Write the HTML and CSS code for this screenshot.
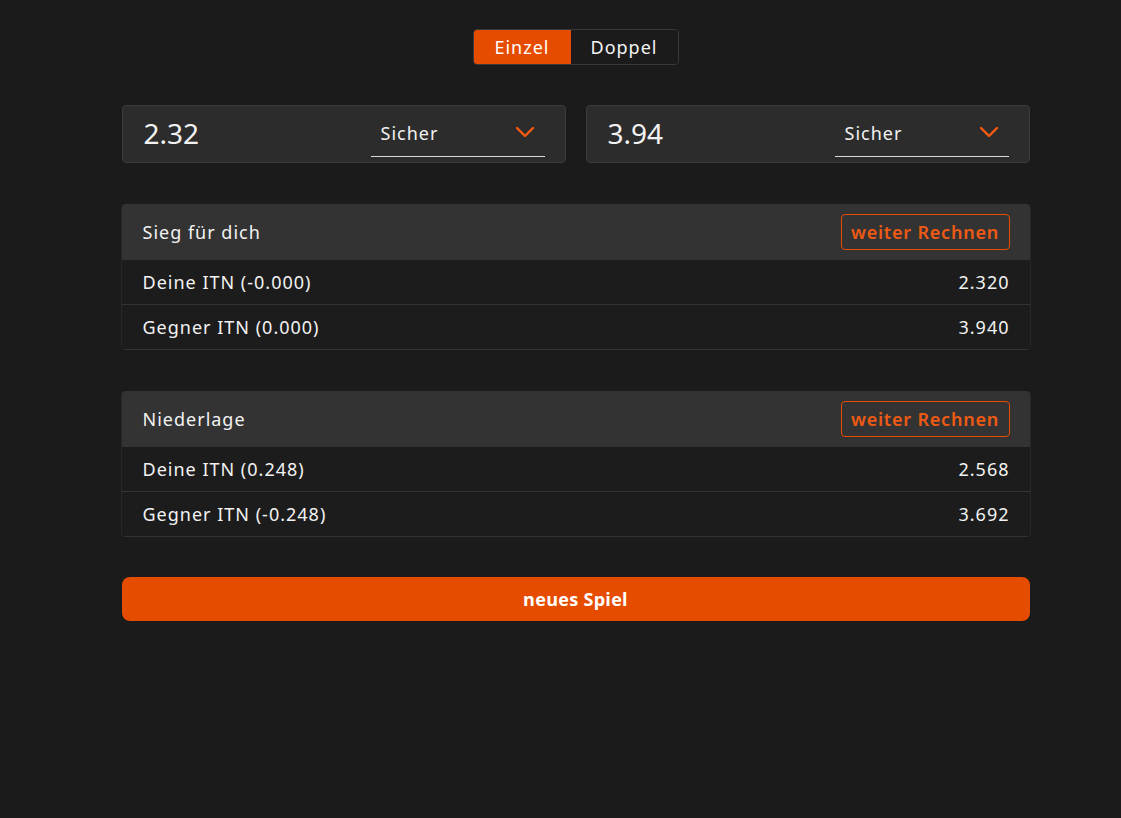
FILE: index.html
```html
<!DOCTYPE html>
<html lang="de">
<head>
<meta charset="utf-8">
<title>ITN Rechner</title>
<link rel="stylesheet" href="styles.css">
</head>
<body>
<main class="page">
  <div class="toggle">
    <button class="tg active">Einzel</button>
    <button class="tg">Doppel</button>
  </div>

  <div class="inputs">
    <div class="field">
      <span class="num">2.32</span>
      <div class="select">
        <span>Sicher</span>
        <svg class="chev" width="20" height="12" viewBox="0 0 20 12"><path d="M2 2 L10 10 L18 2" fill="none" stroke="#ff5a12" stroke-width="2.4" stroke-linecap="round" stroke-linejoin="round"/></svg>
      </div>
    </div>
    <div class="field">
      <span class="num">3.94</span>
      <div class="select">
        <span>Sicher</span>
        <svg class="chev" width="20" height="12" viewBox="0 0 20 12"><path d="M2 2 L10 10 L18 2" fill="none" stroke="#ff5a12" stroke-width="2.4" stroke-linecap="round" stroke-linejoin="round"/></svg>
      </div>
    </div>
  </div>

  <section class="card">
    <div class="card-head">
      <span>Sieg für dich</span>
      <button class="outline">weiter Rechnen</button>
    </div>
    <div class="row"><span>Deine ITN (-0.000)</span><span>2.320</span></div>
    <div class="row"><span>Gegner ITN (0.000)</span><span>3.940</span></div>
  </section>

  <section class="card">
    <div class="card-head">
      <span>Niederlage</span>
      <button class="outline">weiter Rechnen</button>
    </div>
    <div class="row"><span>Deine ITN (0.248)</span><span>2.568</span></div>
    <div class="row"><span>Gegner ITN (-0.248)</span><span>3.692</span></div>
  </section>

  <button class="primary">neues Spiel</button>
</main>
</body>
</html>
```

FILE: styles.css
```css
* { box-sizing: border-box; }
html, body { margin: 0; background: #1b1b1b; }
body {
  font-family: "Noto Sans", "DejaVu Sans", sans-serif;
  color: #f2f2f2;
  padding-left: 30px;
}
.page {
  width: 908px;
  margin: 0 auto;
  padding-top: 29px;
  display: flex;
  flex-direction: column;
}
button { font-family: inherit; cursor: pointer; }

.toggle {
  align-self: center;
  display: flex;
  border: 1px solid #393939;
  border-radius: 4px;
  overflow: hidden;
  height: 36px;
}
.tg {
  border: 0;
  background: #1b1b1b;
  color: #f4f4f4;
  font-size: 18px;
  letter-spacing: 1px;
  padding: 0;
  height: 34px;
}
.tg.active { background: #e64c00; color: #fff; width: 97px; }
.tg:last-child { width: 107px; }

.inputs {
  margin-top: 40px;
  display: flex;
  gap: 20px;
}
.field {
  flex: 1;
  height: 58px;
  background: #2c2c2c;
  border: 1px solid #3b3b3b;
  border-radius: 4px;
  display: flex;
  align-items: center;
  padding: 0 20px 0 21px;
}
.num {
  font-size: 28px;
  flex: 1;
  margin-top: -2px;
}
.select {
  width: 174px;
  height: 51px;
  align-self: flex-end;
  margin-bottom: 5px;
  border-bottom: 1px solid #d8d8d8;
  display: flex;
  align-items: center;
  justify-content: space-between;
  padding: 0 10px 0 10px;
  font-size: 18px;
  letter-spacing: 1px;
}
.select span { margin-top: 4px; }
.chev { margin-top: 2px; }

.card {
  margin-top: 41px;
  background: #1c1c1c;
  border-radius: 4px;
  overflow: hidden;
  box-shadow: -1px 0 0 #272727, 1px 0 0 #272727;
}
.card-head {
  height: 56px;
  background: #333333;
  display: flex;
  align-items: center;
  justify-content: space-between;
  padding: 0 20px 0 21px;
  font-size: 18px;
  letter-spacing: 1px;
}
.outline {
  height: 36px;
  width: 169px;
  background: transparent;
  border: 1px solid #e64c00;
  border-radius: 4px;
  color: #ee5a14;
  font-size: 18px;
  font-weight: 600;
  letter-spacing: 0.8px;
  padding: 0;
}
.row {
  height: 45px;
  display: flex;
  align-items: center;
  justify-content: space-between;
  padding: 0 20px 0 21px;
  border-bottom: 1px solid #333333;
  font-size: 18px;
  letter-spacing: 1px;
}
.primary {
  margin-top: 40px;
  height: 44px;
  border: 0;
  border-radius: 8px;
  background: #e64c00;
  color: #fff;
  font-family: "Open Sans", sans-serif;
  font-weight: 700;
  font-size: 18px;
  letter-spacing: 0.3px;
}
```
